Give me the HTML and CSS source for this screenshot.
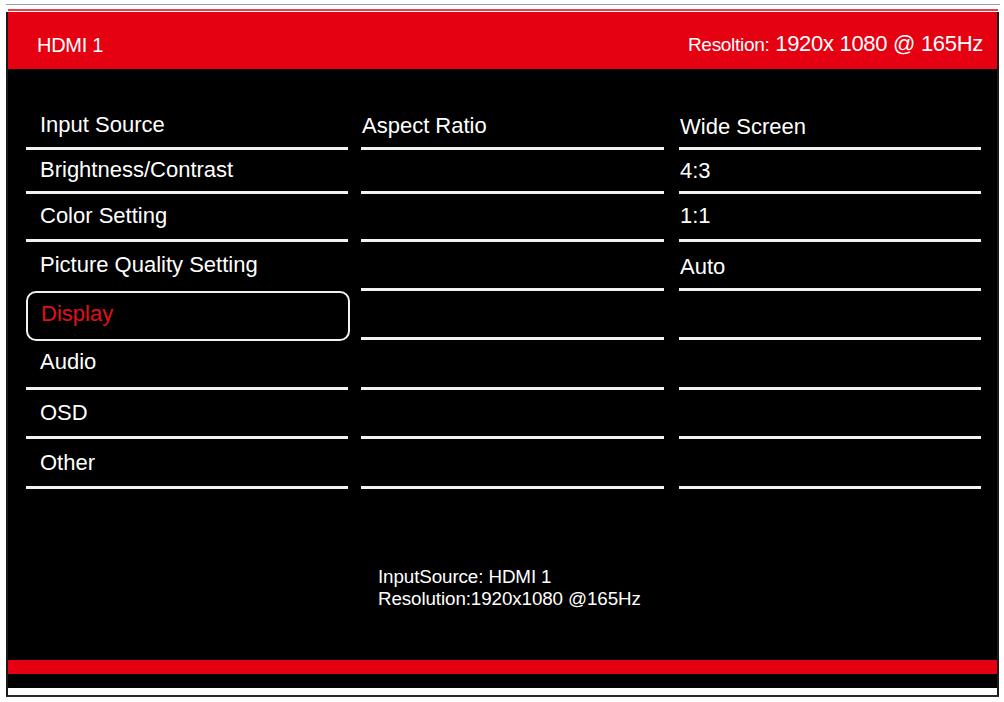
FILE: index.html
```html
<!DOCTYPE html>
<html lang="en">
<head>
<meta charset="utf-8">
<title>OSD Menu</title>
<link rel="stylesheet" href="styles.css">
</head>
<body>
<div class="screen">
  <div class="top-strip"><div class="top-line"></div></div>
  <header class="header">
    <span class="source">HDMI 1</span>
    <span class="res"><span class="res-label">Resoltion:</span> 1920x 1080 @ 165Hz</span>
  </header>
  <main class="body">
    <div class="columns">
      <div class="col col-left">
        <div class="row r1"><span>Input Source</span></div>
        <div class="row r2"><span>Brightness/Contrast</span></div>
        <div class="row r3"><span>Color Setting</span></div>
        <div class="row r4 no-line"><span>Picture Quality Setting</span></div>
        <div class="row selected"><span>Display</span></div>
        <div class="row r6"><span>Audio</span></div>
        <div class="row r7"><span>OSD</span></div>
        <div class="row r8"><span>Other</span></div>
      </div>
      <div class="col col-mid">
        <div class="row r1"><span>Aspect Ratio</span></div>
        <div class="row r2"></div>
        <div class="row r3"></div>
        <div class="row r4"></div>
        <div class="row r5"></div>
        <div class="row r6"></div>
        <div class="row r7"></div>
        <div class="row r8"></div>
      </div>
      <div class="col col-right">
        <div class="row r1"><span>Wide Screen</span></div>
        <div class="row r2"><span>4:3</span></div>
        <div class="row r3"><span>1:1</span></div>
        <div class="row r4"><span>Auto</span></div>
        <div class="row r5"></div>
        <div class="row r6"></div>
        <div class="row r7"></div>
        <div class="row r8"></div>
      </div>
    </div>
    <div class="info">
      <div>InputSource: HDMI 1</div>
      <div>Resolution:1920x1080 @165Hz</div>
    </div>
  </main>
  <div class="bottom-red"></div>
  <div class="bottom-black"></div>
  <div class="bottom-white"></div>
</div>
</body>
</html>
```
FILE: styles.css
```css
* { box-sizing: border-box; }
html, body {
  margin: 0;
  padding: 0;
  background: #ffffff;
}
body {
  width: 1004px;
  height: 702px;
  font-family: "Liberation Sans", Arial, sans-serif;
  padding-top: 4px;
  overflow: hidden;
}
.screen {
  margin-left: 6px;
  width: 993px;
  border-left: 2px solid #1a1a1a;
  border-right: 2px solid #1a1a1a;
  border-bottom: 2px solid #2a2a2a;
  display: flex;
  flex-direction: column;
}
.top-strip {
  height: 8px;
  border-top: 1px solid #a0a0a0;
  background: #ffffff;
  padding-top: 4px;
  margin-left: -2px;
  margin-right: -3px;
}
.top-line {
  height: 2px;
  margin: 0 2px;
  background: #e5404a;
}
.header {
  height: 57px;
  background: #e50012;
  color: #ffffff;
  display: flex;
  align-items: center;
  justify-content: space-between;
  padding: 0 14px 0 29px;
}
.source {
  font-size: 20px;
  margin-top: 9px;
  letter-spacing: -0.3px;
}
.res {
  font-size: 22px;
  margin-top: 7px;
  letter-spacing: -0.3px;
}
.res-label {
  font-size: 19px;
}
.body {
  height: 591px;
  background: #000000;
  color: #ffffff;
  padding: 35px 0 0 18px;
}
.columns {
  display: flex;
}
.col {
  display: flex;
  flex-direction: column;
}
.col-left { width: 324px; }
.col-mid { width: 303px; margin-left: 11px; }
.col-right { width: 302px; margin-left: 15px; }
.row {
  display: flex;
  align-items: flex-end;
  border-bottom: 3px solid #f2f2f2;
  padding-bottom: 10px;
  font-size: 22px;
  line-height: 26px;
}
.col-left .row { margin-right: 2px; padding-left: 14px; }
.col-mid .row { padding-left: 1px; }
.col-right .row { padding-left: 1px; }
.r1 { height: 46px; }
.r2 { height: 44px; }
.r3 { height: 48px; }
.r4 { height: 49px; }
.r5 { height: 49px; }
.r6 { height: 50px; }
.r7 { height: 49px; }
.r8 { height: 50px; }
.col-left .r1 { padding-bottom: 9px; }
.col-left .r2 { padding-bottom: 8px; }
.col-left .r6 { height: 49px; padding-bottom: 12px; }
.no-line { border-bottom: 0; padding-bottom: 13px; }
.col-left .r4 { height: 49px; }
.row.selected {
  height: 50px;
  margin-right: 0;
  border: 2px solid #f2f2f2;
  border-radius: 10px;
  padding: 0 0 5px 13px;
  align-items: center;
  color: #e0101c;
}
.col-right .r1 { padding-bottom: 7px; }
.col-right .r2 { padding-bottom: 7px; }
.col-right .r4 { padding-bottom: 8px; }
.col-mid .r1 { padding-bottom: 8px; }
.info {
  margin: 77px 0 0 352px;
  font-size: 18.8px;
  line-height: 22px;
  letter-spacing: -0.1px;
}
.bottom-red {
  height: 14px;
  background: #e50012;
}
.bottom-black {
  height: 14px;
  background: #000000;
}
.bottom-white {
  height: 7px;
  background: #ffffff;
}
```
